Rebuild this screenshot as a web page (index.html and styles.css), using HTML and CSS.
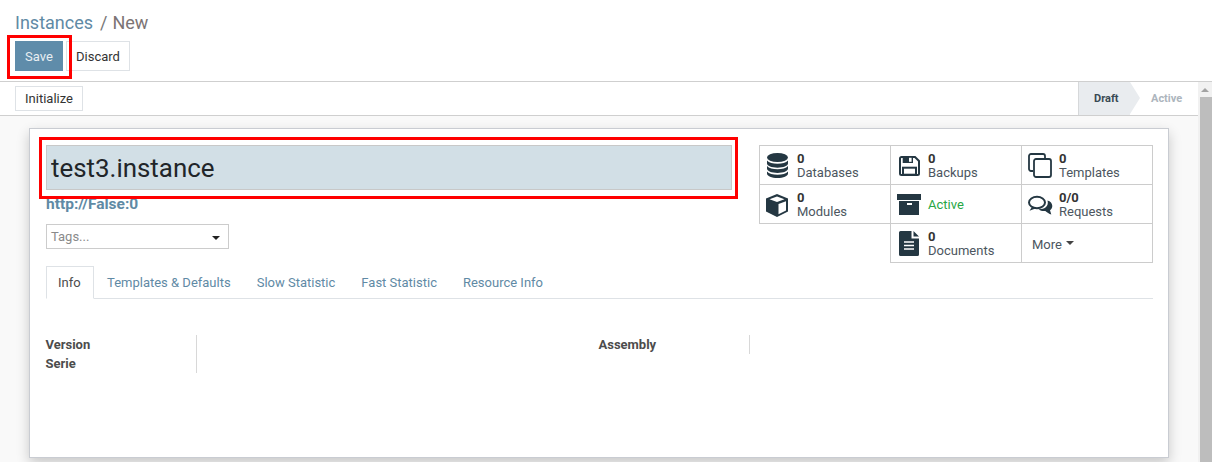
FILE: index.html
```html
<!DOCTYPE html>
<html lang="en">
<head>
<meta charset="utf-8">
<title>Instances / New</title>
<link rel="stylesheet" href="styles.css">
</head>
<body>
<div class="control-panel">
  <div class="breadcrumb"><a class="crumb-link">Instances</a><span class="crumb-sep">/</span><span class="crumb-current">New</span></div>
  <div class="actions">
    <button class="btn btn-primary">Save</button>
    <button class="btn">Discard</button>
    <span class="mark mark-save"></span>
  </div>
</div>
<div class="main">
  <div class="form">
    <div class="statusbar">
      <button class="btn btn-init">Initialize</button>
      <div class="states">
        <span class="state state-current">Draft</span>
        <span class="state state-next">Active</span>
      </div>
    </div>
    <div class="sheet-bg">
      <div class="sheet">
        <div class="top">
          <div class="title-col">
            <div class="title-wrap">
              <input class="title-input" value="test3.instance">
              <span class="mark mark-title"></span>
            </div>
            <a class="url">http://False:0</a>
            <div class="tags"><span>Tags...</span><i class="caret"></i></div>
          </div>
          <div class="stat-grid">
            <div class="stat">
              <svg class="ico" viewBox="0 0 25 26"><g fill="#243742"><ellipse cx="11.500" cy="5.500" rx="10.500" ry="4.500"/><path d="M1 8.500c2 2.200 5.800 3.300 10.500 3.300S20 10.700 22 8.500v3c0 2.300-4.600 4.200-10.500 4.200S1 13.800 1 11.500z"/><path d="M1 14c2 2.200 5.800 3.200 10.500 3.200S20 16.200 22 14v2.800c0 2.300-4.600 4.100-10.500 4.100S1 19.100 1 16.800z"/><path d="M1 19.500c2 2.200 5.800 3.200 10.500 3.200S20 21.700 22 19.500v2c0 2.400-4.600 4.500-10.500 4.500S1 23.900 1 21.500z"/></g></svg>
              <div class="stat-text"><b>0</b><span>Databases</span></div>
            </div>
            <div class="stat">
              <svg class="ico" viewBox="0 0 25 26"><path fill="#fff" stroke="#243742" stroke-width="2" d="M3 6.500a1.500 1.500 0 0 1 1.500-1.500H18l4 4v12.500a1.500 1.500 0 0 1-1.500 1.500h-16A1.500 1.500 0 0 1 3 21.500z"/><path fill="#243742" d="M5.700 4.500H16v6.500H5.700z"/><path fill="#fff" d="M12 5.800h2.600v4H12z"/><rect x="6" y="15.700" width="13" height="7" fill="#fff" stroke="#243742" stroke-width="2"/></svg>
              <div class="stat-text"><b>0</b><span>Backups</span></div>
            </div>
            <div class="stat">
              <svg class="ico" viewBox="0 0 25 26"><path fill="none" stroke="#243742" stroke-width="1.800" d="M5 19H3a2 2 0 0 1-2-2V4a2 2 0 0 1 2-2h12a2 2 0 0 1 2 2v3"/><rect x="6" y="7" width="17" height="18" rx="2" fill="#fff" stroke="#243742" stroke-width="1.800"/></svg>
              <div class="stat-text"><b>0</b><span>Templates</span></div>
            </div>
            <div class="stat">
              <svg class="ico" viewBox="0 0 25 26"><path fill="#243742" d="M11 3l11 4.500v13L11 26 0 20.500v-13z"/><path fill="#fff" d="M11 5.500l7.500 2.800L11 11 3.500 8.300zM12.500 13l7.500-2.800v9.300l-7.500 3.700z"/></svg>
              <div class="stat-text"><b>0</b><span>Modules</span></div>
            </div>
            <div class="stat">
              <svg class="ico" viewBox="0 0 25 26"><path fill="#243742" d="M0 3h24v6H0zM2 10h20v14H2z"/><path fill="#fff" d="M10 12h5v2h-5z"/></svg>
              <div class="stat-text single"><span class="green">Active</span></div>
            </div>
            <div class="stat">
              <svg class="ico" viewBox="0 0 25 26"><ellipse cx="9" cy="11.500" rx="8" ry="5.700" fill="#fff" stroke="#243742" stroke-width="2"/><path fill="#243742" d="M4 16l-2.500 3.800 6-2.300zM19.500 9.500c3 .8 4.800 3 4.800 5.500 0 1.800-1 3.300-2.300 4.300l1.300 4.200c-2-.6-4.500-2-6-3.500-2.500.3-5-.4-7-1.800 5 .3 11-2 9.200-8.700z"/></svg>
              <div class="stat-text"><b>0/0</b><span>Requests</span></div>
            </div>
            <div class="stat stat-empty"></div>
            <div class="stat">
              <svg class="ico" viewBox="0 0 25 26"><path fill="#243742" d="M3.500 1h11v7.500H22v16a1.500 1.500 0 0 1-1.500 1.500h-17A1.500 1.500 0 0 1 2 24.500v-22A1.500 1.500 0 0 1 3.500 1zM16.500 1L22 6.500h-5.500z"/><path fill="#fff" d="M7 11.200h10v1.500H7zM7 14.800h10v1.500H7zM7 18.300h10v1.500H7z"/></svg>
              <div class="stat-text"><b>0</b><span>Documents</span></div>
            </div>
            <div class="stat stat-more"><span>More</span><i class="caret caret-more"></i></div>
          </div>
        </div>
        <div class="tabs">
          <a class="tab tab-active">Info</a>
          <a class="tab">Templates &amp; Defaults</a>
          <a class="tab">Slow Statistic</a>
          <a class="tab">Fast Statistic</a>
          <a class="tab">Resource Info</a>
        </div>
        <div class="fields">
          <div class="group">
            <div class="labels"><b>Version</b><b>Serie</b></div>
          </div>
          <div class="group group-right">
            <div class="labels labels-right"><b>Assembly</b></div>
          </div>
        </div>
      </div>
    </div>
  </div>
  <div class="scrollbar"><i class="arrow"></i><div class="thumb"></div></div>
</div>
</body>
</html>
```

FILE: styles.css
```css
* { box-sizing: border-box; }
html, body { margin: 0; height: 462px; overflow: hidden; background: #fff; }
body { font-family: Roboto, "Liberation Sans", sans-serif; font-size: 13px; color: #4c4c4c; }
.control-panel { height: 82px; padding: 11px 15px 0; border-bottom: 1px solid #cfcfcf; }
.breadcrumb { height: 30px; font-size: 18px; line-height: 24px; }
.crumb-link { color: #5f8aa5; }
.crumb-sep { color: #777; margin: 0 5px 0 7px; }
.crumb-current { color: #7c7474; }
.actions { position: relative; display: flex; gap: 3px; }
.btn { height: 30px; padding: 0 9px; font: 13px Roboto, sans-serif; color: #333; background: #fff; border: 1px solid #dee2e6; }
.btn-primary { width: 48px; padding: 0; color: #e8eef2; background: #5f8caa; border-color: #5f8caa; }
.mark { position: absolute; border: 3px solid #f00; pointer-events: none; }
.mark-save { left: -8px; top: -6px; width: 65px; height: 44px; }
.main { display: flex; height: 380px; }
.form { flex: 1; min-width: 0; display: flex; flex-direction: column; }
.statusbar { height: 34px; display: flex; justify-content: space-between; align-items: flex-start; padding: 4px 0 0 15px; border-bottom: 1px solid #cfcfcf; }
.btn-init { height: 25px; width: 68px; padding: 0; }
.states { display: flex; height: 33px; margin-top: -4px; font-size: 11px; font-weight: 700; }
.state { display: flex; align-items: center; }
.state-current { position: relative; width: 52px; padding-left: 15px; color: #3a4a55; background: #e9ecef; border-left: 1px solid #d6d8da; }
.state-current::after { content: ""; position: absolute; left: 51px; top: 0; border-style: solid; border-width: 16.500px 0 16.500px 10px; border-color: transparent transparent transparent #e9ecef; }
.state-next { width: 68px; padding-left: 21px; color: #adb5bd; }
.sheet-bg { flex: 1; min-height: 0; padding: 12px 29px 0 29px; background: #f9f9f9; overflow: hidden; }
.sheet { height: 330px; padding: 16px 15px 0 16px; background: #fff; border: 1px solid #c9ccd2; box-shadow: 0 5px 12px rgba(0,0,0,.2); }
.top { display: flex; justify-content: space-between; height: 121px; }
.title-col { width: 686px; }
.title-wrap { position: relative; height: 45px; }
.title-input { display: block; width: 100%; height: 100%; padding: 0 4px; font: 25.900px Roboto, sans-serif; color: #212529; background: #d2dfe6; border: 1px solid #c8c8c8; outline: 0; }
.mark-title { left: -7px; top: -8px; width: 699px; height: 62px; }
.url { display: block; margin-top: 5px; height: 20px; font-size: 15.500px; line-height: 18px; font-weight: 700; color: #5f8aa5; }
.tags { display: flex; justify-content: space-between; align-items: center; width: 183px; height: 25px; margin-top: 9px; padding: 0 8px 0 4px; border: 1px solid #ccc; color: #8a8a8a; }
.caret { width: 0; height: 0; border-style: solid; border-width: 4px 4px 0; border-color: #222 transparent transparent; margin-top: 3px; }
.stat-grid { display: grid; grid-template-columns: repeat(3, 131px); grid-auto-rows: 39px; width: 394px; height: 118px; border-right: 1px solid #ccc; border-top: 1px solid #ccc; }
.stat { display: flex; align-items: center; gap: 6px; padding-left: 6px; border-left: 1px solid #ccc; border-bottom: 1px solid #ccc; }
.stat-empty { border-left: 0; border-bottom: 0; }
.ico { flex: none; width: 25px; height: 26px; }
.stat-text { display: flex; flex-direction: column; line-height: 14px; color: #4c5660; padding-top: 1px; }
.stat-text b { color: #333; }
.green { color: #28a745; }
.stat-more { padding: 2px 0 0 10px; gap: 4px; color: #4c5660; }
.caret-more { border-width: 4px 4px 0; border-color: #444 transparent transparent; margin: -3px 0 0 0; }
.tabs { display: flex; height: 33px; border-bottom: 1px solid #dee2e6; }
.tab { height: 33px; padding: 0 12px; line-height: 32px; color: #5f8aa5; border: 1px solid transparent; border-bottom: 0; }
.tab-active { width: 48px; padding: 0 11px; color: #4c4c4c; background: #fff; border-color: #dee2e6; border-bottom: 1px solid #fff; }
.fields { display: flex; margin-top: 36px; }
.group { width: 553px; flex: none; }
.labels { display: flex; flex-direction: column; width: 151px; border-right: 1px solid #d8d8d8; line-height: 19px; color: #4c4c4c; }
.labels b { display: block; height: 19px; margin-left: -.5px; }
.labels-right { height: 19px; }
.scrollbar { flex: none; width: 14px; background: #f1f1f1; }
.arrow { display: block; width: 0; height: 0; margin: 6px auto 0; border-style: solid; border-width: 0 4px 4px; border-color: transparent transparent #a3a3a3; }
.thumb { height: 365px; margin: 5px 0 0 2px; background: #bdbdbd; }
```
